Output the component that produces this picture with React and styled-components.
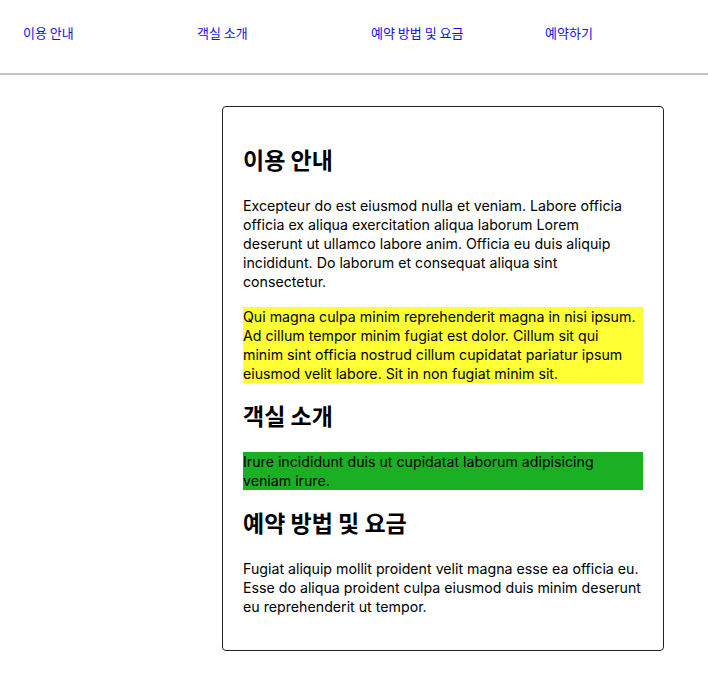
import React from 'react';
import styled, { createGlobalStyle } from 'styled-components';

const GlobalStyle = createGlobalStyle`
  html, body { margin: 0; padding: 0; background: #ffffff; }
  body {
    font-family: Inter, "Noto Sans CJK KR", sans-serif;
    color: #000000;
  }
`;

const NavBar = styled.nav`
  height: 73px;
  border-bottom: 2px solid #c4c4c4;
  box-sizing: content-box;
`;

const NavList = styled.ul`
  list-style: none;
  margin: 0;
  padding: 0 0 0 23px;
  display: grid;
  grid-template-columns: repeat(4, 174px);
`;

const NavItem = styled.li`
  padding-top: 22px;
`;

const NavLink = styled.a`
  font-family: "Noto Sans CJK KR", sans-serif;
  font-size: 13px;
  line-height: 18px;
  color: #1010ee;
  text-decoration: none;
`;

const Main = styled.main`
  padding: 31px 0 0 222px;
`;

const Card = styled.article`
  width: 400px;
  padding: 20px;
  border: 1px solid #222222;
  border-radius: 4px;
`;

const Heading = styled.h2`
  font-family: "Noto Sans CJK KR", sans-serif;
  font-weight: 700;
  font-size: 23px;
  line-height: 31px;
  margin: 17px 0 21px;
`;

const Paragraph = styled.p`
  font-family: Inter, "Noto Sans CJK KR", sans-serif;
  font-size: 14.2px;
  line-height: 19px;
  white-space: nowrap;
  margin: 16px 0 14px;
  background: ${(p) => p.$bg || 'transparent'};
`;

const navItems = ['이용 안내', '객실 소개', '예약 방법 및 요금', '예약하기'];

const sections = [
  {
    title: '이용 안내',
    paragraphs: [
      {
        lines: [
          'Excepteur do est eiusmod nulla et veniam. Labore officia',
          'officia ex aliqua exercitation aliqua laborum Lorem',
          'deserunt ut ullamco labore anim. Officia eu duis aliquip',
          'incididunt. Do laborum et consequat aliqua sint',
          'consectetur.',
        ],
      },
      {
        bg: '#ffff33',
        lines: [
          'Qui magna culpa minim reprehenderit magna in nisi ipsum.',
          'Ad cillum tempor minim fugiat est dolor. Cillum sit qui',
          'minim sint officia nostrud cillum cupidatat pariatur ipsum',
          'eiusmod velit labore. Sit in non fugiat minim sit.',
        ],
      },
    ],
  },
  {
    title: '객실 소개',
    paragraphs: [
      {
        bg: '#1bb024',
        lines: [
          'Irure incididunt duis ut cupidatat laborum adipisicing',
          'veniam irure.',
        ],
      },
    ],
  },
  {
    title: '예약 방법 및 요금',
    paragraphs: [
      {
        lines: [
          'Fugiat aliquip mollit proident velit magna esse ea officia eu.',
          'Esse do aliqua proident culpa eiusmod duis minim deserunt',
          'eu reprehenderit ut tempor.',
        ],
      },
    ],
  },
];

export default function App() {
  return (
    <>
      <GlobalStyle />
      <NavBar>
        <NavList>
          {navItems.map((item) => (
            <NavItem key={item}>
              <NavLink href="#">{item}</NavLink>
            </NavItem>
          ))}
        </NavList>
      </NavBar>
      <Main>
        <Card>
          {sections.map((s) => (
            <React.Fragment key={s.title}>
              <Heading>{s.title}</Heading>
              {s.paragraphs.map((p, i) => (
                <Paragraph key={i} $bg={p.bg}>
                  {p.lines.map((l, j) => (
                    <React.Fragment key={j}>
                      {j > 0 && <br />}
                      {l}
                    </React.Fragment>
                  ))}
                </Paragraph>
              ))}
            </React.Fragment>
          ))}
        </Card>
      </Main>
    </>
  );
}
